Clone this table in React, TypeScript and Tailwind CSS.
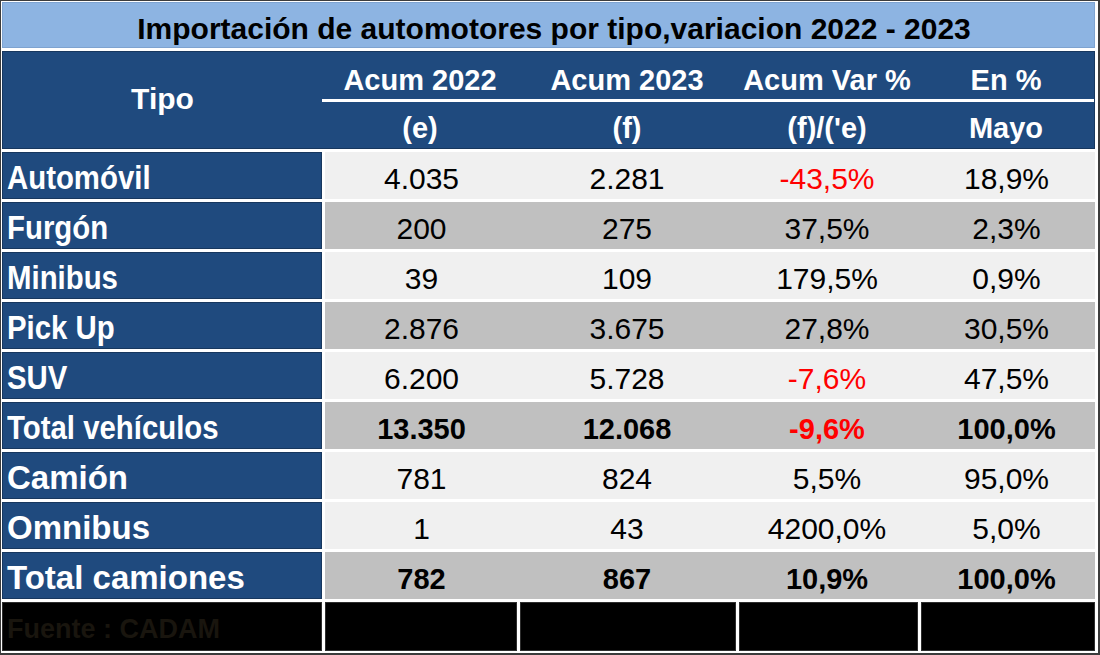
import React from "react";

type Row = {
  label: string;
  a: string;
  b: string;
  c: string;
  d: string;
  red?: boolean;
  gray?: boolean;
  bold?: boolean;
  big?: boolean;
};

const rows: Row[] = [
  { label: "Automóvil", a: "4.035", b: "2.281", c: "-43,5%", d: "18,9%", red: true },
  { label: "Furgón", a: "200", b: "275", c: "37,5%", d: "2,3%", gray: true },
  { label: "Minibus", a: "39", b: "109", c: "179,5%", d: "0,9%" },
  { label: "Pick Up", a: "2.876", b: "3.675", c: "27,8%", d: "30,5%", gray: true },
  { label: "SUV", a: "6.200", b: "5.728", c: "-7,6%", d: "47,5%", red: true },
  { label: "Total vehículos", a: "13.350", b: "12.068", c: "-9,6%", d: "100,0%", red: true, gray: true, bold: true },
  { label: "Camión", a: "781", b: "824", c: "5,5%", d: "95,0%", big: true },
  { label: "Omnibus", a: "1", b: "43", c: "4200,0%", d: "5,0%", big: true },
  { label: "Total camiones", a: "782", b: "867", c: "10,9%", d: "100,0%", gray: true, bold: true, big: true },
];

function Cell({ w, children, red, bold }: { w: string; children: React.ReactNode; red?: boolean; bold?: boolean }) {
  return (
    <div className={`${w} flex items-center justify-center pt-[7px]`}>
      <span
        className={`${bold ? "font-bold text-[29px]" : "text-[30px]"} ${red ? "text-[#ff0000]" : "text-black"} leading-none`}
      >
        {children}
      </span>
    </div>
  );
}

function DataRow({ r }: { r: Row }) {
  return (
    <div className="flex h-[47px]">
      <div className="w-[320px] bg-[#1f4a7e] border border-[#17375e] flex items-center pl-[4px] pt-[4px] overflow-hidden">
        {r.big ? (
          <span className="text-white font-bold text-[33px] leading-none whitespace-nowrap">{r.label}</span>
        ) : (
          <span className="text-white font-bold text-[33px] leading-none whitespace-nowrap inline-block origin-left scale-x-[0.89]">
            {r.label}
          </span>
        )}
      </div>
      <div className={`ml-[3px] flex flex-1 ${r.gray ? "bg-[#c0c0c0]" : "bg-[#f0f0f0]"}`}>
        <Cell w="w-[193px]" bold={r.bold}>{r.a}</Cell>
        <Cell w="w-[218px]" bold={r.bold}>{r.b}</Cell>
        <Cell w="w-[182px]" bold={r.bold} red={r.red && r.c.startsWith("-")}>{r.c}</Cell>
        <Cell w="flex-1" bold={r.bold}>{r.d}</Cell>
      </div>
    </div>
  );
}

function HeadCell({ w, children, pt }: { w: string; children: React.ReactNode; pt: string }) {
  return (
    <div className={`${w} flex items-center justify-center ${pt}`}>
      <span className="text-white font-bold text-[29px] leading-none whitespace-nowrap">{children}</span>
    </div>
  );
}

export default function App() {
  return (
    <div
      className="w-[1100px] h-[655px] bg-white border-l border-t border-r-2 border-b-2 border-[#3c3c3c] pt-px pl-px pr-[3px] pb-[2px] flex flex-col"
      style={{ fontFamily: "'Liberation Sans', Arial, sans-serif" }}
    >
      {/* Title */}
      <div className="h-[46px] bg-[#8db4e2] border border-[#7ea3d0] flex items-center justify-center pt-[7px] pl-[11px]">
        <span className="text-black font-bold text-[30px] leading-none whitespace-nowrap">
          Importación de automotores por tipo,variacion 2022 - 2023
        </span>
      </div>

      {/* Header */}
      <div className="mt-[3px] h-[98px] flex bg-[#1f4a7e] border border-[#17375e]">
        <div className="w-[319px] flex items-center justify-center pb-[2px]">
          <span className="text-white font-bold text-[30px] leading-none">Tipo</span>
        </div>
        <div className="flex-1 flex flex-col">
          <div className="h-[47px] flex">
            <HeadCell w="w-[196px]" pt="pt-[10px]">Acum 2022</HeadCell>
            <HeadCell w="w-[218px]" pt="pt-[10px]">Acum 2023</HeadCell>
            <HeadCell w="w-[182px]" pt="pt-[10px]">Acum Var %</HeadCell>
            <HeadCell w="flex-1" pt="pt-[10px]">En %</HeadCell>
          </div>
          <div className="h-[3px] bg-white" />
          <div className="flex-1 flex">
            <HeadCell w="w-[196px]" pt="pt-[6px]">(e)</HeadCell>
            <HeadCell w="w-[218px]" pt="pt-[6px]">(f)</HeadCell>
            <HeadCell w="w-[182px]" pt="pt-[6px]">(f)/('e)</HeadCell>
            <HeadCell w="flex-1" pt="pt-[6px]">Mayo</HeadCell>
          </div>
        </div>
      </div>

      {/* Body */}
      <div className="mt-[3px] flex flex-col gap-[3px]">
        {rows.map((r) => (
          <DataRow key={r.label} r={r} />
        ))}
      </div>

      {/* Footer */}
      <div className="mt-[3px] flex-1 flex gap-[3px]">
        <div className="w-[320px] bg-black border border-[#2e2e2e] flex items-center pl-[4px] pt-[6px] overflow-hidden">
          <span className="text-[#19150e] font-bold text-[27px] leading-none whitespace-nowrap">Fuente : CADAM</span>
        </div>
        <div className="w-[192px] bg-black border border-[#2e2e2e]" />
        <div className="w-[216px] bg-black border border-[#2e2e2e]" />
        <div className="w-[179px] bg-black border border-[#2e2e2e]" />
        <div className="flex-1 bg-black border border-[#2e2e2e]" />
      </div>
    </div>
  );
}
